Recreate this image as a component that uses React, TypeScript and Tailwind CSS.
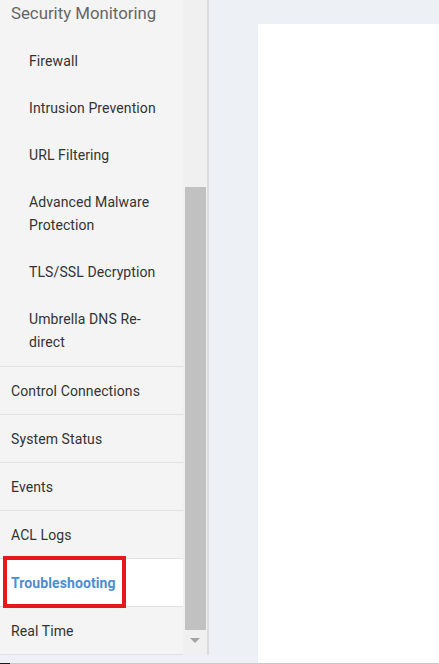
import React from "react";

const subItems: string[][] = [
  ["Firewall"],
  ["Intrusion Prevention"],
  ["URL Filtering"],
  ["Advanced Malware", "Protection"],
  ["TLS/SSL Decryption"],
  ["Umbrella DNS Re-", "direct"],
];

const topItems = ["Control Connections", "System Status", "Events", "ACL Logs", "Troubleshooting", "Real Time"];

export default function App() {
  return (
    <div className="w-[439px] h-[664px] overflow-hidden bg-[#edf1f6] flex flex-col" style={{ fontFamily: "Roboto, 'Liberation Sans', sans-serif" }}>
      <div className="flex h-[663px]">
        <div className="flex h-[655px] w-[209px] shrink-0">
          <div className="w-[183px] bg-[#f4f4f4] flex flex-col tracking-[0.1px]">
            <div className="h-[38px] pl-[11px] text-[16.8px] leading-[27px] tracking-normal text-[#666]">Security Monitoring</div>
            <div className="border-b border-[#e2e2e2]">
              {subItems.map((lines, i) => (
                <div key={i} className="pl-[29px] py-3 text-[14px] leading-[23px] text-[#333]">
                  {lines.map((l, j) => (
                    <div key={j}>{l}</div>
                  ))}
                </div>
              ))}
            </div>
            {topItems.map((t) => {
              const active = t === "Troubleshooting";
              return (
                <div
                  key={t}
                  className={`relative border-b border-[#e2e2e2] pl-[11px] pt-[2px] flex items-center text-[14px] h-[48px] ${active ? "bg-white text-[#4a8fd6] font-bold" : "text-[#333]"}`}
                >
                  {t}
                  {active && (
                    <div className="absolute left-[3px] top-[-3px] w-[123px] h-[52px] border-4 border-[#e8161e]" />
                  )}
                </div>
              );
            })}
          </div>
          <div className="w-[26px] bg-[#f0f0f0] border-r-2 border-[#dcdcdc] flex flex-col items-center">
            <div className="mt-[187px] w-[21px] h-[443px] bg-[#c1c1c1]" />
            <div className="mt-[8px] w-0 h-0 border-l-[5px] border-r-[5px] border-t-[5px] border-l-transparent border-r-transparent border-t-[#a3a3a3]" />
          </div>
        </div>
        <div className="flex-1 pt-[24px] pl-[49px]">
          <div className="bg-white h-full" />
        </div>
      </div>
      <div className="h-[1px] flex">
        <div className="w-[10px] bg-[#1a1a1a]" />
        <div className="flex-1 bg-[#c8c8c8]" />
      </div>
    </div>
  );
}
